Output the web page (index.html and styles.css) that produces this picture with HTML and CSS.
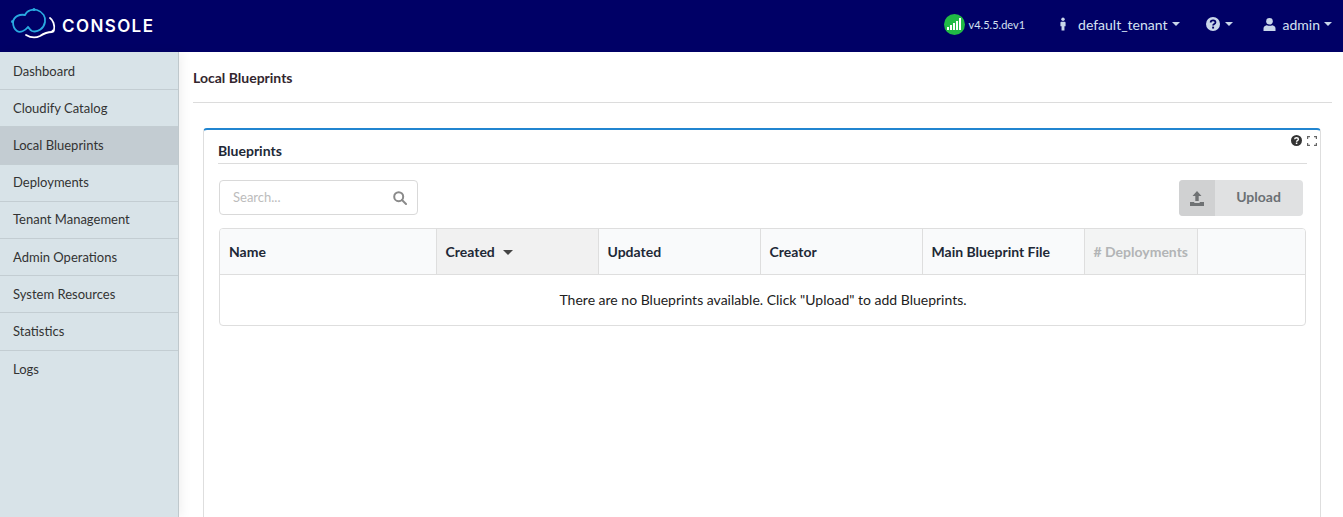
FILE: index.html
```html
<!DOCTYPE html>
<html lang="en">
<head>
  <meta charset="UTF-8" />
  <title>Console</title>
  <link rel="stylesheet" href="styles.css">
</head>
<body>
  <header class="topbar">
    <div class="logo">
      <svg class="logo-mark" width="46" height="36" viewBox="11 8 46 36" fill="none">
        <path d="M13 22 C14 16 20 14 25 15 C27 10 33 9 37 10 C43 12 46 17 45 22 C44 28 38 33 32 31 C30 30 29 28 28 27 C25 31 20 33 17 31 C14 29 13 26 13 22 Z" stroke="#29a9e0" stroke-width="1.800"/>
        <circle cx="12.500" cy="21.500" r="1.500" fill="#29a9e0"/>
        <circle cx="34" cy="9.500" r="1.500" fill="#29a9e0"/>
        <path d="M50 18 C53 20 55 25 54 30 M26 35 C31 38 36 38 40 36 C43 34 47 32 52 32" stroke="#fff" stroke-width="1.800" stroke-linecap="round"/>
        <circle cx="53" cy="31" r="1.500" fill="#fff"/>
      </svg>
      <span class="logo-text">CONSOLE</span>
    </div>
    <div class="topbar-right">
      <div class="version">
        <span class="status-dot">
          <svg width="14" height="12" viewBox="0 0 14 12" fill="#fff">
            <rect x="0" y="9" width="2" height="3"/>
            <rect x="3" y="7" width="2" height="5"/>
            <rect x="6" y="5" width="2" height="7"/>
            <rect x="9" y="3" width="2" height="9"/>
            <rect x="12" y="0" width="2" height="12"/>
          </svg>
        </span>
        <span>v4.5.5.dev1</span>
      </div>
      <div class="top-item tenant">
        <svg class="top-icon" width="6" height="14" viewBox="0 0 7 15" fill="#c9d6ea">
          <circle cx="3.500" cy="2" r="2"/>
          <path d="M1.500 5 H5.500 Q6.500 5 6.500 6 V10 H5.200 V15 H1.800 V10 H0.500 V6 Q0.500 5 1.500 5 Z"/>
        </svg>
        <span>default_tenant</span><i class="caret"></i>
      </div>
      <div class="top-item help">
        <svg width="14" height="14" viewBox="0 0 16 16">
          <circle cx="8" cy="8" r="8" fill="#c9d6ea"/>
          <path d="M5.300 6.200 C5.400 3.200 10.800 3.200 10.800 6.200 C10.800 8.200 8.100 8 8.100 9.800" fill="none" stroke="#000066" stroke-width="2"/>
          <rect x="7" y="11" width="2.200" height="2.200" fill="#000066"/>
        </svg>
        <i class="caret"></i>
      </div>
      <div class="top-item user">
        <svg class="top-icon" width="13" height="13" viewBox="0 0 13 13" fill="#c9d6ea">
          <circle cx="6.500" cy="3.300" r="3.300"/>
          <path d="M0.500 13 V10.500 C0.500 8 3 7.200 4 7.200 C5 8 8 8 9 7.200 C10 7.200 12.500 8 12.500 10.500 V13 Z"/>
        </svg>
        <span>admin</span><i class="caret"></i>
      </div>
    </div>
  </header>

  <div class="layout">
    <nav class="sidebar">
      <a class="nav-item">Dashboard</a>
      <a class="nav-item">Cloudify Catalog</a>
      <a class="nav-item active">Local Blueprints</a>
      <a class="nav-item">Deployments</a>
      <a class="nav-item">Tenant Management</a>
      <a class="nav-item">Admin Operations</a>
      <a class="nav-item">System Resources</a>
      <a class="nav-item">Statistics</a>
      <a class="nav-item">Logs</a>
    </nav>

    <main class="content">
      <div class="page-title">Local Blueprints</div>

      <section class="widget">
        <div class="widget-tools">
          <svg width="11" height="11" viewBox="0 0 16 16">
            <circle cx="8" cy="8" r="8" fill="#333"/>
            <path d="M5.300 6.200 C5.400 3.200 10.800 3.200 10.800 6.200 C10.800 8.200 8.100 8 8.100 9.800" fill="none" stroke="#fff" stroke-width="2"/>
            <rect x="7" y="11" width="2.200" height="2.200" fill="#fff"/>
          </svg>
          <svg width="10" height="10" viewBox="0 0 10 10" fill="none" stroke="#666" stroke-width="1.200">
            <path d="M0.600 3 V0.600 H3 M7 0.600 H9.400 V3 M9.400 7 V9.400 H7 M3 9.400 H0.600 V7"/>
          </svg>
        </div>
        <h3 class="widget-title">Blueprints</h3>

        <div class="toolbar">
          <div class="search">
            <span class="search-text">Search...</span>
            <svg width="14" height="14" viewBox="0 0 14 14" fill="none" stroke="#8a8a8a" stroke-width="2">
              <circle cx="5.700" cy="5.700" r="4.500"/>
              <path d="M9 9 L13 13" stroke-linecap="round"/>
            </svg>
          </div>
          <div class="upload-btn">
            <span class="upload-icon">
              <svg width="14" height="15" viewBox="0 0 14 15" fill="#6f7274">
                <path d="M7 0 L11.500 5 H8.700 V10 H5.300 V5 H2.500 Z"/>
                <path d="M0 11 H4.300 V12 H9.700 V11 H14 V15 H0 Z"/>
              </svg>
            </span>
            <span class="upload-label">Upload</span>
          </div>
        </div>

        <div class="table-wrap">
          <table class="data-table">
            <thead>
              <tr>
                <th class="col-name">Name</th>
                <th class="col-date sorted">Created <i class="sort-caret"></i></th>
                <th class="col-date">Updated</th>
                <th class="col-date">Creator</th>
                <th class="col-date">Main Blueprint File</th>
                <th class="col-count disabled"># Deployments</th>
                <th></th>
              </tr>
            </thead>
            <tbody>
              <tr>
                <td class="empty" colspan="7">There are no Blueprints available. Click "Upload" to add Blueprints.</td>
              </tr>
            </tbody>
          </table>
        </div>
      </section>
    </main>
  </div>
</body>
</html>
```

FILE: styles.css
```css
* {
  box-sizing: border-box;
}

html, body {
  height: 100%;
}

body {
  margin: 0;
  overflow: hidden;
  font-family: Lato, "Open Sans", sans-serif;
  font-size: 14px;
  color: #212121;
  background: #fff;
}

.topbar {
  display: flex;
  justify-content: space-between;
  align-items: center;
  height: 52px;
  background: #000066;
  color: #d5e2f2;
}

.logo {
  display: flex;
  align-items: center;
  padding-left: 11px;
}

.logo-mark {
  margin-right: 5px;
}

.logo-text {
  font-family: Inter, Lato, sans-serif;
  font-size: 17px;
  font-weight: 600;
  letter-spacing: 1.400px;
  color: #fff;
  margin-top: -1px;
}

.topbar-right {
  display: flex;
  align-items: center;
  padding-right: 11px;
  margin-top: -4px;
}

.version {
  display: flex;
  align-items: center;
  font-size: 11px;
  margin-right: 35px;
}

.status-dot {
  display: flex;
  align-items: center;
  justify-content: center;
  width: 21px;
  height: 21px;
  margin-right: 4px;
  border-radius: 50%;
  background: #21ba45;
}

.top-item {
  display: flex;
  align-items: center;
}

.top-icon {
  margin-right: 12px;
}

.tenant {
  margin-right: 26px;
}

.help {
  margin-right: 30px;
}

.help .caret {
  margin-left: 5px;
}

.user .top-icon {
  margin-right: 7px;
}

.caret {
  width: 0;
  height: 0;
  margin-left: 4px;
  border-left: 4.500px solid transparent;
  border-right: 4.500px solid transparent;
  border-top: 4.500px solid #c9d6ea;
}

.layout {
  display: flex;
  height: calc(100% - 52px);
}

.sidebar {
  flex: 0 0 179px;
  padding-top: 1px;
  background: #d8e3e8;
  border-right: 1px solid #bfc8cc;
  box-shadow: 3px 0 10px rgba(0, 0, 0, 0.06);
}

.nav-item {
  display: flex;
  align-items: center;
  height: 37.200px;
  padding: 0 0 1px 13px;
  border-bottom: 1px solid #c3cdd2;
  font-size: 13px;
  color: #333;
}

.nav-item:last-child {
  border-bottom: none;
}

.nav-item.active {
  background: #c3ccd2;
}

.content {
  flex: 1;
  padding: 0 11px 0 14px;
  min-width: 0;
}

.page-title {
  height: 51px;
  padding-top: 17px;
  border-bottom: 1px solid #dcdcdc;
  font-weight: 700;
  font-size: 14px;
  color: #33262e;
}

.widget {
  position: relative;
  height: 600px;
  margin: 25px 11px 0 10px;
  padding: 0 14px;
  border: 1px solid #dedede;
  border-top: 2px solid #2185d0;
  border-radius: 4px;
}

.widget-tools {
  position: absolute;
  top: 5px;
  right: 3px;
  display: flex;
  align-items: center;
  gap: 5px;
}

.widget-title {
  margin: 0 -1px 0 0;
  height: 34px;
  padding-top: 12px;
  border-bottom: 1px solid #dcdcdc;
  font-size: 14px;
  font-weight: 700;
  color: #212836;
}

.toolbar {
  display: flex;
  justify-content: space-between;
  margin: 16px 3px 0 1px;
}

.search {
  display: flex;
  align-items: center;
  justify-content: space-between;
  width: 199px;
  height: 35px;
  padding: 0 10px 0 13px;
  border: 1px solid #d9d9d9;
  border-radius: 4px;
  background: #fff;
}

.search-text {
  font-size: 13px;
  color: #bcbcbc;
  margin-top: -1px;
}

.upload-btn {
  display: flex;
  width: 124px;
  height: 36px;
  border-radius: 4px;
  overflow: hidden;
  background: #e0e1e2;
  color: #6b7074;
  font-weight: 700;
}

.upload-icon {
  display: flex;
  align-items: center;
  justify-content: center;
  width: 36px;
  background: #d0d1d2;
}

.upload-label {
  flex: 1;
  padding-right: 1px;
  text-align: center;
  line-height: 34px;
}

.table-wrap {
  margin: 12px 0 0 1px;
  border: 1px solid #dedede;
  border-radius: 4px;
  overflow: hidden;
}

.data-table {
  width: 100%;
  table-layout: fixed;
  border-collapse: collapse;
}

.data-table th {
  height: 45px;
  padding: 0 8px 0 9px;
  border-left: 1px solid #dedede;
  border-bottom: 1px solid #dedede;
  background: #f9fafb;
  text-align: left;
  font-weight: 700;
  font-size: 14px;
  color: #212836;
  white-space: nowrap;
}

.data-table th:first-child {
  border-left: none;
}

.col-name {
  width: 216px;
}

.col-date {
  width: 162px;
}

.col-count {
  width: 113px;
}

.data-table th.sorted {
  background: #f1f1f1;
}

.data-table th.disabled {
  background: #f3f4f4;
  color: #b2b4b6;
}

.sort-caret {
  display: inline-block;
  width: 0;
  height: 0;
  margin-left: 5px;
  vertical-align: 2px;
  border-left: 5px solid transparent;
  border-right: 5px solid transparent;
  border-top: 5px solid #444;
}

.empty {
  height: 51px;
  padding-left: 2px;
  text-align: center;
  color: #212121;
  font-size: 14px;
}
```
